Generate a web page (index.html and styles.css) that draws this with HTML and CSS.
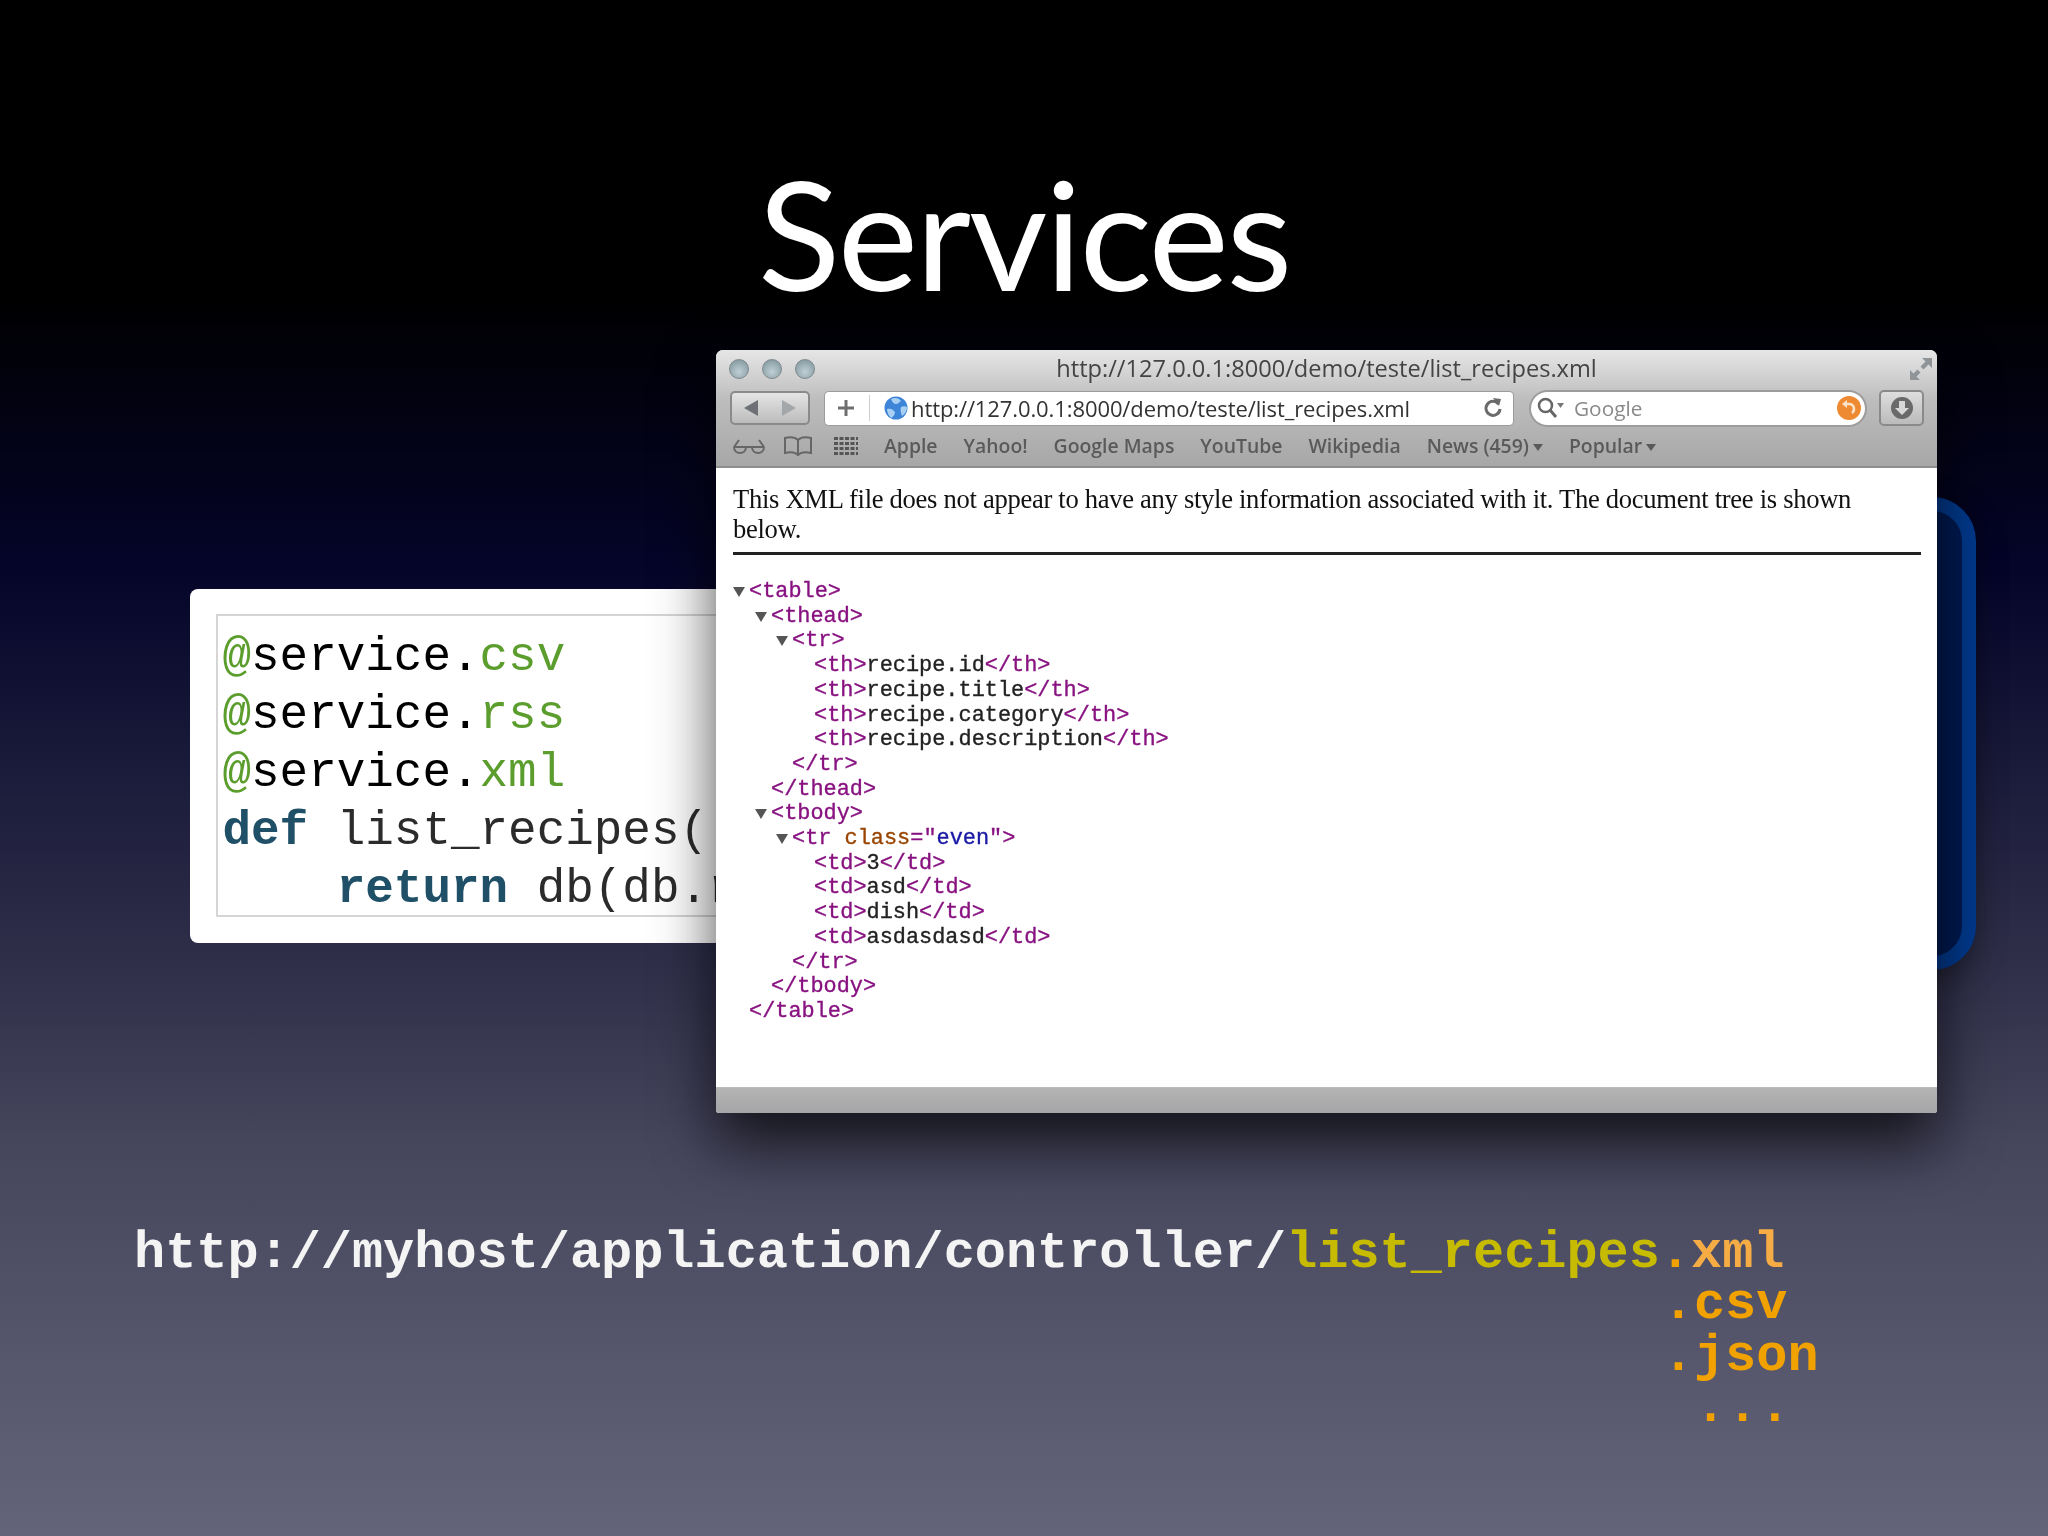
FILE: index.html
```html
<!DOCTYPE html>
<html lang="en">
<head>
<meta charset="utf-8">
<title>Services</title>
<link rel="stylesheet" href="styles.css">
</head>
<body>
<main class="slide">
  <h1 class="title">Services</h1>
  <section class="stage">
    <div class="blue-panel"></div>
    <div class="code-card">
      <pre class="code-box"><span class="deco">@</span>service.<span class="deco">csv</span>
<span class="deco">@</span>service.<span class="deco">rss</span>
<span class="deco">@</span>service.<span class="deco">xml</span>
<span class="kw">def</span> <span class="soft">list_recipes(</span>
    <span class="kw">return</span> <span class="soft">db(db.r</span></pre>
    </div>
    <div class="browser">
      <div class="chrome">
        <div class="titlebar">
          <div class="lights"><i></i><i></i><i></i></div>
          <span class="win-title">http://127.0.0.1:8000/demo/teste/list_recipes.xml</span>
          <svg class="resize" width="24" height="24" viewBox="0 0 24 24"><path d="M13 1h10v10l-3.500-3.500-5 5-3-3 5-5zM1 13v10h10l-3.500-3.500 4-4-3-3-4 4z" fill="#8f9498"/></svg>
        </div>
        <div class="toolbar">
          <div class="navbtn">
            <svg width="18" height="20" viewBox="0 0 18 20"><path d="M16 2v16L2 10z" fill="#6d7074"/></svg>
            <svg width="18" height="20" viewBox="0 0 18 20"><path d="M2 2v16l14-8z" fill="#a4a7aa"/></svg>
          </div>
          <div class="address">
            <svg class="plus" width="18" height="18" viewBox="0 0 18 18"><path d="M9 1v16M1 9h16" stroke="#6f6f6f" stroke-width="3"/></svg>
            <span class="addr-sep"></span>
            <svg class="globe" width="24" height="24" viewBox="0 0 24 24"><circle cx="12" cy="12" r="11.500" fill="#3d85d8"/><path d="M7 3c4-2 8-1 10 2-2 1-3 3-5 3S8 6 7 3zM3 13c3-1 6 0 8 3 0 3-2 5-4 6-2-2-4-5-4-9zM17 11c2-1 4-1 6 0 0 4-2 7-5 9-1-3-2-6-1-9z" fill="#a9d0f2"/></svg>
            <span class="addr-text">http://127.0.0.1:8000/demo/teste/list_recipes.xml</span>
            <svg width="20" height="22" viewBox="0 0 20 22"><path d="M15.500 7A7 7 0 1 0 17 12" fill="none" stroke="#6b6b6b" stroke-width="3"/><path d="M10 1l8 1-2 7z" fill="#6b6b6b"/></svg>
          </div>
          <div class="search">
            <svg width="28" height="22" viewBox="0 0 28 22"><circle cx="8.500" cy="8.500" r="6.500" fill="none" stroke="#666" stroke-width="2.500"/><path d="M13 13l6 7" stroke="#666" stroke-width="3"/><path d="M20 6h7l-3.500 5z" fill="#777"/></svg>
            <span class="search-text">Google</span>
            <svg class="snap" width="26" height="26" viewBox="0 0 26 26"><circle cx="13" cy="13" r="12" fill="#ee8a32"/><path d="M16 18c3-2 3-9-3-9H9" fill="none" stroke="#fbe3c9" stroke-width="2.500"/><path d="M11 5l-5 4 5 4z" fill="#fbe3c9"/></svg>
          </div>
          <div class="dlbtn">
            <svg width="24" height="24" viewBox="0 0 24 24"><circle cx="12" cy="12" r="11" fill="#6a6a6a"/><path d="M9 5h6v7h4l-7 7-7-7h4z" fill="#d8d8d8"/></svg>
          </div>
        </div>
        <div class="bookmarks">
          <svg width="34" height="18" viewBox="0 0 34 18"><g fill="none" stroke="#666" stroke-width="2"><path d="M2 10h30M2 10L7 3M32 10L27 3"/><path d="M2 10c0 8 12 8 12 0M20 10c0 8 12 8 12 0"/></g></svg>
          <svg class="book" width="30" height="20" viewBox="0 0 30 20"><path d="M15 4C12 1 6 1 2 2v15c4-1 10-1 13 2 3-3 9-3 13-2V2c-4-1-10-1-13 2zv14" fill="none" stroke="#666" stroke-width="2"/></svg>
          <svg class="grid" width="24" height="18" viewBox="0 0 24 18"><path d="M0 1.500h24M0 6.500h24M0 11.500h24M0 16.500h24" stroke="#555" stroke-width="3" stroke-dasharray="4 1.500"/></svg>
          <span class="bm first">Apple</span>
          <span class="bm">Yahoo!</span>
          <span class="bm">Google Maps</span>
          <span class="bm">YouTube</span>
          <span class="bm">Wikipedia</span>
          <span class="bm">News (459)<b class="caret"></b></span>
          <span class="bm">Popular<b class="caret"></b></span>
        </div>
      </div>
      <div class="page">
        <p class="xml-note">This XML file does not appear to have any style information associated with it. The document tree is shown below.</p>
        <hr class="xml-rule">
        <div class="tree">
          <div class="row i0"><b class="tri"></b><span class="t">&lt;table&gt;</span></div>
          <div class="row i1"><b class="tri"></b><span class="t">&lt;thead&gt;</span></div>
          <div class="row i2"><b class="tri"></b><span class="t">&lt;tr&gt;</span></div>
          <div class="row i3"><span class="t">&lt;th&gt;</span>recipe.id<span class="t">&lt;/th&gt;</span></div>
          <div class="row i3"><span class="t">&lt;th&gt;</span>recipe.title<span class="t">&lt;/th&gt;</span></div>
          <div class="row i3"><span class="t">&lt;th&gt;</span>recipe.category<span class="t">&lt;/th&gt;</span></div>
          <div class="row i3"><span class="t">&lt;th&gt;</span>recipe.description<span class="t">&lt;/th&gt;</span></div>
          <div class="row i2"><span class="t">&lt;/tr&gt;</span></div>
          <div class="row i1"><span class="t">&lt;/thead&gt;</span></div>
          <div class="row i1"><b class="tri"></b><span class="t">&lt;tbody&gt;</span></div>
          <div class="row i2"><b class="tri"></b><span class="t">&lt;tr</span> <span class="an">class</span><span class="t">="</span><span class="av">even</span><span class="t">"&gt;</span></div>
          <div class="row i3"><span class="t">&lt;td&gt;</span>3<span class="t">&lt;/td&gt;</span></div>
          <div class="row i3"><span class="t">&lt;td&gt;</span>asd<span class="t">&lt;/td&gt;</span></div>
          <div class="row i3"><span class="t">&lt;td&gt;</span>dish<span class="t">&lt;/td&gt;</span></div>
          <div class="row i3"><span class="t">&lt;td&gt;</span>asdasdasd<span class="t">&lt;/td&gt;</span></div>
          <div class="row i2"><span class="t">&lt;/tr&gt;</span></div>
          <div class="row i1"><span class="t">&lt;/tbody&gt;</span></div>
          <div class="row i0"><span class="t">&lt;/table&gt;</span></div>
        </div>
      </div>
      <div class="statusbar"></div>
    </div>
  </section>
  <div class="url">
    <div class="url-line"><span class="u-base">http://myhost/application/controller/</span><span class="u-fn">list_recipes</span><span class="u-ext">.</span><span class="u-xml">xml</span></div>
    <div class="url-line ext">.csv</div>
    <div class="url-line ext">.json</div>
    <div class="url-line ext more">...</div>
  </div>
</main>
</body>
</html>
```
FILE: styles.css
```css
* { box-sizing: border-box; }
html, body { margin: 0; padding: 0; }
.slide {
  width: 2048px;
  height: 1536px;
  overflow: hidden;
  display: flex;
  flex-direction: column;
  background: linear-gradient(180deg, #000 0, #000 290px, #05052a 570px, #33334d 1000px, #45455c 1140px, #5f5f75 1480px, #636379 1536px);
}
.title {
  flex: none;
  margin: 0;
  padding-top: 147px;
  height: 350px;
  text-align: center;
  font: 400 152px/170px Lato, sans-serif;
  letter-spacing: -2.2px;
  color: #fff;
  filter: blur(.5px);
}
.stage {
  flex: none;
  position: relative;
  height: 870px;
}
.blue-panel {
  position: absolute;
  left: 1500px;
  top: 147px;
  width: 476px;
  height: 473px;
  border: 14px solid #013a8f;
  border-radius: 44px;
  background: #001a52;
  box-shadow: 0 10px 30px rgba(0, 0, 0, .35);
}
.code-card {
  position: absolute;
  left: 190px;
  top: 239px;
  width: 600px;
  height: 354px;
  padding: 25px 0 26px 26px;
  background: #fff;
  border-radius: 8px;
  overflow: hidden;
}
.code-box {
  margin: 0;
  height: 303px;
  padding: 12px 0 0 4.5px;
  border: 2px solid #d5d5d5;
  border-right: 0;
  overflow: hidden;
  font: 400 47.6px/58px "Liberation Mono", monospace;
  color: #000;
  filter: blur(.5px);
}
.deco { color: #5c9e2e; }
.kw { color: #1f5068; font-weight: 700; }
.soft { color: #2b2b2b; }
.browser {
  position: absolute;
  left: 716px;
  top: 0;
  width: 1221px;
  height: 763px;
  display: flex;
  flex-direction: column;
  border-radius: 7px 7px 3px 3px;
  overflow: hidden;
  background: #fff;
  box-shadow: 0 30px 60px rgba(0, 0, 0, .7);
}
.chrome {
  height: 118px;
  flex: none;
  display: flex;
  flex-direction: column;
  background: linear-gradient(180deg, #e6e6e6 0, #bdbdbd 50px, #a7a7a7 116px);
  border-bottom: 2px solid #8e8e8e;
  font-family: "Open Sans", sans-serif;
  filter: blur(.5px);
}
.titlebar {
  height: 38px;
  flex: none;
  display: flex;
  align-items: center;
  padding: 0 4px 0 13px;
  position: relative;
}
.lights { display: flex; gap: 13px; }
.lights i {
  width: 20px;
  height: 20px;
  border-radius: 50%;
  background: radial-gradient(circle at 50% 65%, #bfd0d5, #8fa3aa 70%, #7b8a90);
  border: 1px solid #7d888e;
}
.win-title {
  position: absolute;
  left: 0;
  right: 0;
  top: 3px;
  text-align: center;
  font-size: 23.6px;
  line-height: 30px;
  color: #444;
}
.resize { margin-left: auto; position: relative; }
.toolbar {
  height: 40px;
  flex: none;
  display: flex;
  align-items: center;
  padding: 0 14px;
}
.navbtn {
  width: 80px;
  height: 34px;
  flex: none;
  display: flex;
  align-items: center;
  justify-content: space-around;
  border: 2px solid #8a8a8a;
  border-radius: 5px;
  background: linear-gradient(#e4e4e4, #bcbcbc);
}
.address {
  width: 688px;
  height: 33px;
  flex: none;
  margin-left: 15px;
  display: flex;
  align-items: center;
  padding: 0 10px 0 12px;
  background: #fff;
  border-radius: 4px;
  box-shadow: 0 0 0 1px #9c9c9c;
}
.addr-sep { width: 1px; height: 26px; background: #cfcfcf; margin: 0 14px; }
.addr-text { font-size: 22px; color: #333; margin: 0 auto 0 3px; letter-spacing: -.1px; white-space: nowrap; }
.search {
  width: 334px;
  height: 33px;
  flex: none;
  margin-left: 18px;
  display: flex;
  align-items: center;
  padding: 0 3px 0 6px;
  background: #fff;
  border-radius: 17px;
  box-shadow: 0 0 0 2px #9c9c9c;
}
.search-text { font-size: 20.8px; color: #8a8a8a; margin-left: 9px; }
.snap { margin-left: auto; }
.dlbtn {
  width: 45px;
  height: 36px;
  flex: none;
  margin-left: 14px;
  display: flex;
  align-items: center;
  justify-content: center;
  border: 2px solid #8a8a8a;
  border-radius: 5px;
  background: linear-gradient(#dedede, #bbb);
}
.bookmarks {
  flex: 1;
  display: flex;
  align-items: center;
  padding: 0 13px 3px 16px;
  font-size: 19.4px;
  font-weight: 600;
  color: #5a5a5a;
}
.book { margin-left: 17px; }
.grid { margin-left: 21px; }
.bm { margin-left: 26px; white-space: nowrap; }
.bm.first { margin-left: 26px; }
.caret {
  display: inline-block;
  margin-left: 4px;
  vertical-align: 2px;
  border: 5px solid transparent;
  border-top: 7px solid #5a5a5a;
  border-bottom: 0;
}
.page {
  flex: 1;
  padding: 16px 16px 0 17px;
  background: #fff;
  filter: blur(.5px);
}
.xml-note {
  margin: 0;
  font: 400 26.6px/30px "Liberation Serif", serif;
  letter-spacing: -.3px;
  color: #111;
}
.xml-rule {
  margin: 8px 0 0;
  height: 3px;
  border: 0;
  background: #222;
}
.tree {
  margin-top: 25px;
  font: 400 21.9px/24.7px "Liberation Mono", monospace;
  color: #222;
  -webkit-text-stroke: .35px currentColor;
}
.row { white-space: pre; position: relative; }
.i0 { padding-left: 16px; }
.i1 { padding-left: 38px; }
.i2 { padding-left: 59px; }
.i3 { padding-left: 81px; }
.tri {
  position: absolute;
  margin-left: -16px;
  top: 7px;
  border: 6px solid transparent;
  border-top: 10px solid #555;
  border-bottom: 0;
}
.t { color: #881280; }
.an { color: #994500; }
.av { color: #1a1aa6; }
.statusbar {
  height: 26px;
  flex: none;
  background: linear-gradient(#b4b4b4, #a5a5a8);
  border-top: 1px solid #bbb;
}
.url {
  flex: none;
  margin-top: 8px;
  padding-left: 134px;
  font: 700 51.9px/51.3px "Liberation Mono", monospace;
  color: #f4f4f4;
  filter: blur(.4px);
}
.url-line { white-space: pre; }
.url-line.ext { padding-left: calc(49ch + 3px); color: #f2a200; }
.url-line.more { padding-left: calc(50ch + 4px); letter-spacing: 1px; }
.u-fn { color: #c6bb00; }
.u-ext { color: #f2a200; }
.u-xml { color: #f6ac45; }
```
